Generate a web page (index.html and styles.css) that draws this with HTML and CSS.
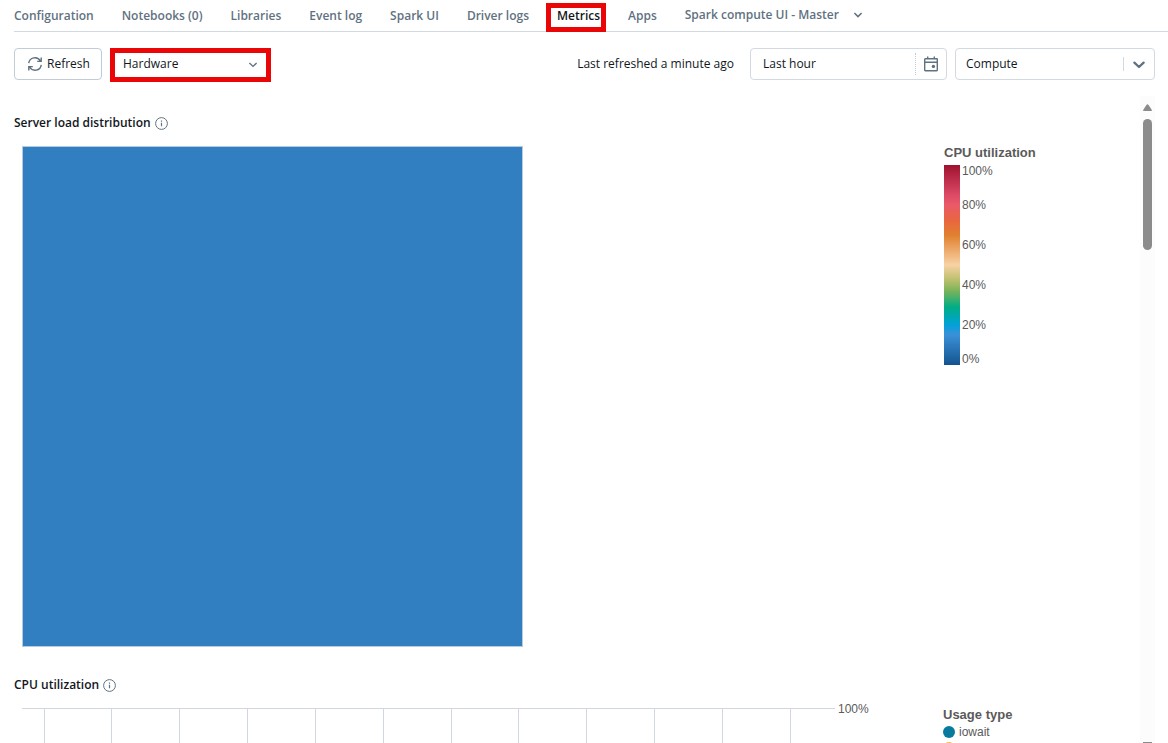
FILE: index.html
```html
<!DOCTYPE html>
<html lang="en">
<head>
<meta charset="utf-8">
<title>Compute metrics</title>
<link rel="stylesheet" href="styles.css">
</head>
<body>
<div class="page">
  <nav class="tabs">
    <a class="tab" href="#">Configuration</a>
    <a class="tab" href="#">Notebooks (0)</a>
    <a class="tab" href="#">Libraries</a>
    <a class="tab" href="#">Event log</a>
    <a class="tab" href="#">Spark UI</a>
    <a class="tab" href="#">Driver logs</a>
    <a class="tab tab-active" href="#" aria-current="page">Metrics</a>
    <a class="tab" href="#">Apps</a>
    <button class="tab tab-menu" type="button">Spark compute UI - Master
      <svg width="10" height="6" viewBox="0 0 10 6" fill="none" stroke="currentColor" stroke-width="1.5"><path d="M1.4 1 5 4.6 8.6 1"/></svg>
    </button>
  </nav>

  <div class="toolbar">
    <button class="refresh" type="button">
      <svg width="16" height="16" viewBox="0 0 16 16" fill="none" stroke="currentColor" stroke-width="1.4"><path d="M1.7 7.2A6.3 6.3 0 0 1 13.4 5M14.3 8.8A6.3 6.3 0 0 1 2.6 11M14.2 1.4V5.4H10.2M1.8 14.6V10.6H5.8"/></svg>
      Refresh
    </button>
    <div class="picker picker-marked">
      <select aria-label="Metric group"><option>Hardware</option></select>
      <svg class="picker-chevron" width="10" height="6" viewBox="0 0 10 6" fill="none" stroke="currentColor" stroke-width="1.4"><path d="M1.4 1 5 4.4 8.6 1"/></svg>
    </div>
    <span class="status">Last refreshed a minute ago</span>
    <div class="field">
      <input type="text" value="Last hour" aria-label="Time range" readonly>
      <button class="calendar" type="button" aria-label="Open calendar">
        <svg width="14" height="16" viewBox="0 0 14 16" fill="none" stroke="currentColor" stroke-width="1.4"><rect x=".7" y="2.7" width="12.6" height="12" rx=".6"/><path d="M.7 6.2H13.3M3.7 .4V2.7M10.3 .4V2.7"/><circle cx="9.4" cy="10.4" r="1.7" fill="currentColor" stroke="none"/></svg>
      </button>
    </div>
    <div class="picker picker-compute">
      <select aria-label="Node"><option>Compute</option></select>
      <svg class="picker-chevron" width="12" height="8" viewBox="0 0 12 8" fill="none" stroke="currentColor" stroke-width="2.3" stroke-linecap="round" stroke-linejoin="round"><path d="M1.4 1.6 6 6 10.6 1.6"/></svg>
    </div>
  </div>

  <div class="scroller">
    <main class="content">
      <section class="panel">
        <h2>Server load distribution
          <svg width="13" height="13" viewBox="0 0 13 13" fill="none" stroke="currentColor"><circle cx="6.5" cy="6.5" r="5.9"/><path d="M6.5 5.8V9.3M6.5 3.6V4.8" stroke-width="1.2"/></svg>
        </h2>
        <div class="panel-body">
          <div class="heatmap"></div>
          <aside class="legend">
            <h3>CPU utilization</h3>
            <div class="scale">
              <div class="ramp"></div>
              <div class="ticks"><span>100%</span><span>80%</span><span>60%</span><span>40%</span><span>20%</span><span>0%</span></div>
            </div>
          </aside>
        </div>
      </section>
      <section class="panel">
        <h2>CPU utilization
          <svg width="13" height="13" viewBox="0 0 13 13" fill="none" stroke="currentColor"><circle cx="6.5" cy="6.5" r="5.9"/><path d="M6.5 5.8V9.3M6.5 3.6V4.8" stroke-width="1.2"/></svg>
        </h2>
        <div class="panel-body">
          <div class="chart">
            <svg width="813" height="200" viewBox="0 0 813 200" fill="none" stroke="#cfd8e0"><path d="M0 .5H813M22.5 0V200M89.5 0V200M157.5 0V200M225.5 0V200M293.5 0V200M361.5 0V200M429.5 0V200M496.5 0V200M564.5 0V200M632.5 0V200M700.5 0V200M768.5 0V200"/></svg>
            <span class="axis-label">100%</span>
          </div>
          <aside class="legend legend-series">
            <h3>Usage type</h3>
            <ul>
              <li><i class="dot dot-iowait"></i>iowait</li>
              <li><i class="dot dot-other"></i></li>
            </ul>
          </aside>
        </div>
      </section>
    </main>
    <div class="scrollbar">
      <svg width="9" height="8" viewBox="0 0 9 8" fill="#8b8b8b"><path d="M3.6.8Q4.5-.4 5.4.8L8.7 5.8Q9.2 7 8 7H1Q-.2 7 .3 5.8Z"/></svg>
      <div class="thumb"></div>
      <div class="arrow-down"></div>
    </div>
  </div>
</div>
</body>
</html>
```

FILE: styles.css
```css
* { box-sizing: border-box; }

body {
  margin: 0;
  background: #fff;
  color: #11171c;
  font: 12px/20px "Segoe UI", "Open Sans", sans-serif;
}

button, select, input { font: inherit; color: inherit; margin: 0; }
h2, h3, ul { margin: 0; padding: 0; }

.page {
  display: flex;
  flex-direction: column;
  height: 100vh;
  overflow: hidden;
}

.tabs {
  display: flex;
  flex: none;
  gap: 28px;
  height: 32px;
  margin-left: 14px;
  padding-top: 6px;
  border-bottom: 1px solid #d1d9e1;
}

.tab {
  position: relative;
  color: #5f7281;
  font-weight: 600;
  text-decoration: none;
  white-space: nowrap;
}

.tab-active { color: #11171c; }

.tab-active::after {
  content: "";
  position: absolute;
  inset: -3px -6px -1px -11px;
  border: 5px solid #ea0606;
}

.tab-menu {
  display: flex;
  align-items: center;
  gap: 14px;
  height: 18px;
  padding: 0;
  border: 0;
  background: none;
}

.toolbar {
  display: flex;
  flex: none;
  align-items: flex-start;
  gap: 8px;
  padding: 16px 13px 14px 14px;
  height: 64px;
}

.refresh {
  display: flex;
  align-items: center;
  gap: 4px;
  width: 88px;
  height: 32px;
  padding: 0 12px;
  border: 1px solid #c0cdd8;
  border-radius: 4px;
  background: #fff;
  white-space: nowrap;
}

svg { flex: none; }
.refresh svg, .picker-chevron, .calendar { color: #5f7281; }

.picker {
  position: relative;
  display: flex;
  height: 32px;
  border: 1px solid #d1d9e1;
  border-radius: 4px;
}

.picker select {
  width: 100%;
  padding: 0 10px;
  border: 0;
  background: none;
  appearance: none;
}

.picker-chevron {
  position: absolute;
  right: 8px;
  top: 9px;
  pointer-events: none;
}

.picker-marked {
  width: 161px;
  height: 34px;
  border: 5px solid #ea0606;
  border-radius: 0;
}

.picker-marked select { padding: 0 8px 2px; }

.picker-compute { width: 200px; }
.picker-compute .picker-chevron { top: 12px; right: 9px; }

.picker-compute::after {
  content: "";
  position: absolute;
  top: 8px;
  bottom: 8px;
  right: 30px;
  border-left: 1px solid #d1d9e1;
}

.status { margin: 0 8px 0 auto; line-height: 32px; white-space: nowrap; }

.field {
  display: flex;
  align-items: center;
  width: 197px;
  height: 32px;
  border: 1px solid #d1d9e1;
  border-radius: 4px;
}

.field input {
  flex: 1;
  min-width: 0;
  padding: 0 12px;
  border: 0;
  background: none;
}

.calendar {
  display: flex;
  align-items: center;
  justify-content: center;
  width: 31px;
  height: 22px;
  padding: 0;
  border: 0;
  border-left: 1px dotted #c0cdd8;
  background: none;
}

.scroller {
  display: flex;
  flex: 1;
  min-height: 0;
  padding: 0 13px 0 14px;
}

.content {
  flex: 1;
  min-width: 0;
  overflow: hidden;
  padding-top: 17px;
}

.panel { margin-bottom: 28px; }

.panel h2 {
  display: flex;
  align-items: center;
  gap: 4px;
  height: 20px;
  font-size: 12px;
  font-weight: 600;
}

.panel h2 svg { color: #5f7281; }

.panel-body {
  display: flex;
  justify-content: space-between;
  padding: 13px 0 0 8px;
}

.heatmap {
  width: 501px;
  height: 501px;
  border: 1px solid #b5cbe0;
  background: #317fc1;
}

.legend {
  width: 196px;
  color: #5a5a5a;
  font: 12px/18px "Liberation Sans", Arial, sans-serif;
}

.legend h3 { font-size: 13px; line-height: 18px; padding-top: 2px; margin-top: -4px; }
.legend ul { list-style: none; }
.legend li { display: flex; align-items: center; gap: 4px; height: 16px; }

.legend-series { width: 197px; }

.scale { display: flex; gap: 2px; padding-top: 3px; }

.ramp {
  width: 16px;
  height: 200px;
  background: linear-gradient(#9e1230 0%, #dc4a67 15%, #ea5a68 20%, #e9663f 28%, #e0802f 35%, #f8d2a4 50%, #c0c070 57%, #7ab35a 63%, #00ad85 71%, #02a1d9 80%, #3b90d8 85%, #13548f 100%);
}

.ticks {
  display: grid;
  grid-template-rows: 20px repeat(4, 40px) 20px;
  align-items: center;
  line-height: 12px;
}

.ticks span:first-child { align-self: start; }
.ticks span:last-child { align-self: end; }

.chart { display: flex; gap: 3px; }

.axis-label {
  margin-top: -6px;
  color: #5a5a5a;
  font: 12px/14px "Liberation Sans", Arial, sans-serif;
}

.dot { width: 12px; height: 12px; border-radius: 50%; }
.dot-iowait { background: #077a9d; }
.dot-other { background: #ffb84d; }

.scrollbar {
  display: flex;
  flex-direction: column;
  align-items: center;
  width: 15px;
  padding-top: 8px;
  background: #fcfcfc;
}

.thumb {
  width: 9px;
  height: 131px;
  margin-top: 7px;
  border-radius: 5px;
  background: #8b8b8b;
}

.arrow-down {
  width: 9px;
  height: 1px;
  margin-top: auto;
  background: #8b8b8b;
}
```
